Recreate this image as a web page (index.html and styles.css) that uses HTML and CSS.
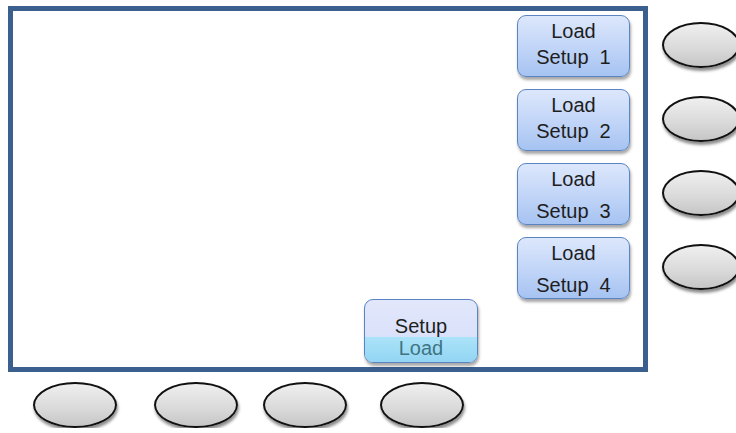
FILE: index.html
```html
<!DOCTYPE html>
<html lang="en">
<head>
    <meta charset="UTF-8">
    <meta name="viewport" content="width=device-width, initial-scale=1.0">
    <title>Setup Load</title>
    <link rel="stylesheet" href="styles.css">
</head>
<body>
    <div class="panel">
        <!-- Screen with soft keys -->
        <div class="screen">
            <div class="work">
                <div class="setup-btn">
                    <span class="setup-title">Setup</span>
                    <span class="setup-mode">Load</span>
                </div>
            </div>
            <div class="soft-keys">
                <div class="soft-key">Load<br>Setup&nbsp; 1</div>
                <div class="soft-key">Load<br>Setup&nbsp; 2</div>
                <div class="soft-key spread"><span>Load</span><span>Setup&nbsp; 3</span></div>
                <div class="soft-key spread"><span>Load</span><span>Setup&nbsp; 4</span></div>
            </div>
        </div>

        <!-- Hard keys on the right -->
        <div class="side-keys">
            <div class="hard-key side"></div>
            <div class="hard-key side"></div>
            <div class="hard-key side"></div>
            <div class="hard-key side"></div>
        </div>
    </div>

    <!-- Hard keys below -->
    <div class="bottom-keys">
        <div class="hard-key k1"></div>
        <div class="hard-key k2"></div>
        <div class="hard-key k3"></div>
        <div class="hard-key k4"></div>
    </div>
</body>
</html>
```

FILE: styles.css
```css
html, body {
    overflow: hidden;
}
body {
    margin: 0;
    font-family: "Liberation Sans", Arial, sans-serif;
    color: #1e1e1e;
    background: #ffffff;
}
.panel {
    display: flex;
    align-items: flex-start;
}
.screen {
    display: flex;
    flex-shrink: 0;
    box-sizing: border-box;
    width: 640px;
    height: 366px;
    margin: 6px 0 0 8px;
    border: 5px solid #3b5f8f;
    background: #ffffff;
}
.work {
    flex: 1;
    display: flex;
    justify-content: flex-end;
    align-items: flex-end;
}
.soft-keys {
    display: flex;
    flex-direction: column;
    gap: 12px;
    width: 113px;
    margin-right: 13px;
    padding-top: 4px;
}
.soft-key {
    box-sizing: border-box;
    height: 62px;
    padding-top: 2px;
    border: 1px solid #5a84c4;
    border-radius: 9px;
    background: linear-gradient(to bottom, #dce7fb 0%, #c3d6f8 50%, #a6c3f1 100%);
    box-shadow: 1px 3px 3px rgba(0, 0, 0, 0.35);
    font-size: 20px;
    line-height: 26px;
    text-align: center;
}
.soft-key.spread {
    display: flex;
    flex-direction: column;
    align-items: center;
    gap: 6px;
}
.setup-btn {
    display: flex;
    flex-direction: column;
    box-sizing: border-box;
    width: 114px;
    height: 64px;
    margin: 0 39px 4px 0;
    padding-top: 15px;
    border: 1px solid #5a84c4;
    border-radius: 9px;
    overflow: hidden;
    background: linear-gradient(to bottom, #e2e7fb 0%, #d4ddf9 100%);
    box-shadow: 1px 3px 3px rgba(0, 0, 0, 0.35);
    font-size: 20px;
    line-height: 22px;
    text-align: center;
}
.setup-mode {
    flex: 1;
    color: #3f7482;
    background: linear-gradient(to bottom, #abe3f9 0%, #93d5f3 100%);
}
.hard-key {
    flex-shrink: 0;
    box-sizing: border-box;
    width: 84px;
    height: 46px;
    border: 2.5px solid #111111;
    border-radius: 50%;
    background: linear-gradient(to bottom, #efefef 0%, #d9d9d9 60%, #c6c6c6 100%);
    box-shadow: 1px 3px 3px rgba(0, 0, 0, 0.45);
}
.side-keys {
    display: flex;
    flex-direction: column;
    gap: 28px;
    margin-left: 14px;
    padding-top: 22px;
}
.hard-key.side {
    width: 78px;
}
.bottom-keys {
    display: flex;
    margin-top: 10px;
    padding-left: 33px;
}
.k2 {
    margin-left: 37px;
}
.k3 {
    margin-left: 25px;
}
.k4 {
    margin-left: 33px;
}
```
